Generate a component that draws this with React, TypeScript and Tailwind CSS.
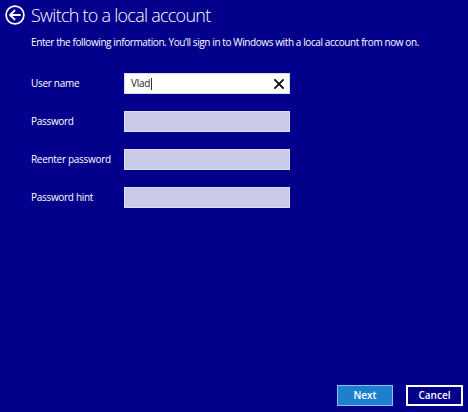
const fields = ["User name", "Password", "Reenter password", "Password hint"];

function BackIcon() {
  return (
    <svg width="20" height="20" viewBox="0 0 20 20" fill="none" stroke="white" strokeLinecap="round" strokeLinejoin="round">
      <circle cx="10" cy="10" r="8.9" strokeWidth="1.7" />
      <path d="M5 10h10M9.6 5.6L5 10l4.6 4.4" strokeWidth="1.9" />
    </svg>
  );
}

function ClearIcon() {
  return (
    <svg width="10" height="10" viewBox="0 0 10 10" stroke="#111" strokeWidth="1.8" strokeLinecap="square">
      <path d="M1 1l8 8M9 1l-8 8" />
    </svg>
  );
}

export default function App() {
  return (
    <div
      className="w-[468px] h-[412px] bg-[#03008c] text-white flex flex-col overflow-hidden"
      style={{ fontFamily: '"Open Sans", "Noto Sans", sans-serif' }}
    >
      <div className="flex items-center gap-[6px] pl-[5px] pt-[5px]">
        <BackIcon />
        <h1 className="text-[18px] leading-[20px] font-light tracking-[-0.75px]">Switch to a local account</h1>
      </div>

      <p className="ml-[31px] mt-[10px] text-[10px] leading-[14px] tracking-[-0.4px]">
        Enter the following information. You’ll sign in to Windows with a local account from now on.
      </p>

      <div className="ml-[31px] mt-[24px] grid grid-cols-[93px_166px] gap-y-[17px]">
        {fields.map((label, i) => (
          <div key={label} className="contents">
            <div className="h-[21px] flex items-center text-[10px] tracking-[-0.3px]">{label}</div>
            {i === 0 ? (
              <div className="h-[21px] bg-white border border-[#d8d8ee] flex items-center pl-[6px] pr-[5px]">
                <span className="text-[10px] tracking-[-0.3px] text-[#222]">Vlad</span>
                <span className="w-px h-[12px] bg-[#333] ml-[1px]" />
                <span className="ml-auto flex">
                  <ClearIcon />
                </span>
              </div>
            ) : (
              <div className="h-[21px] bg-[#c9c9e8] border border-[#dcdcf2]" />
            )}
          </div>
        ))}
      </div>

      <div className="mt-auto flex justify-end gap-[13px] pr-[5px] pb-[6px]">
        <button className="w-[56px] h-[21px] bg-[#1d7fd0] border border-[#8cc0ec] text-[10px] font-semibold">
          Next
        </button>
        <button className="w-[57px] h-[21px] bg-[#03008c] border-2 border-white text-[10px] font-semibold">
          Cancel
        </button>
      </div>
    </div>
  );
}
